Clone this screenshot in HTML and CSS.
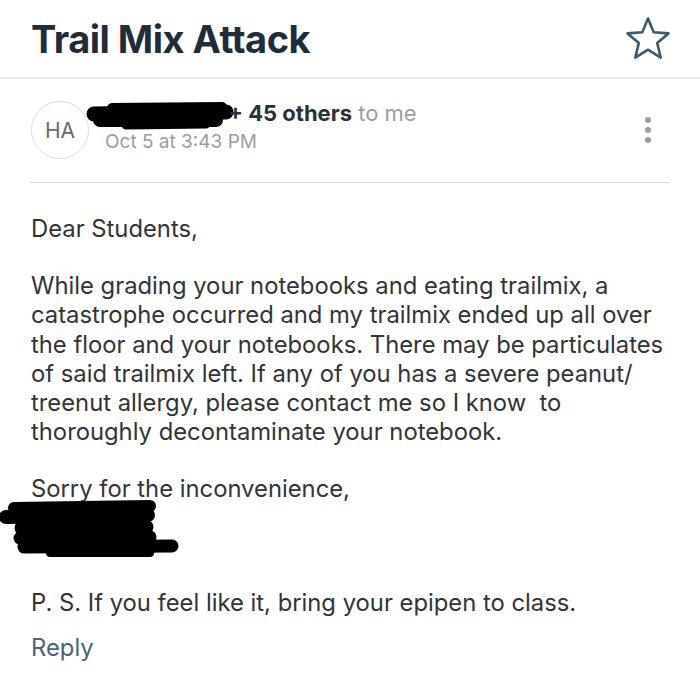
FILE: index.html
```html
<!DOCTYPE html>
<html>
<head>
<meta charset="utf-8">
<link rel="stylesheet" href="styles.css">
</head>
<body>
<div class="page">
  <header class="header">
    <h1 class="title">Trail Mix Attack</h1>
    <svg class="star" width="46" height="46" viewBox="0 0 46 46">
      <path d="M23 2.5 L28.7 16.3 L43.5 17.4 L32.2 27 L35.7 41.6 L23 33.7 L10.3 41.6 L13.8 27 L2.5 17.4 L17.3 16.3 Z" fill="none" stroke="#3e5a6e" stroke-width="2.6" stroke-linejoin="round"/>
    </svg>
  </header>
  <section class="sender">
    <div class="avatar">HA</div>
    <div class="meta">
      <div class="from"><svg class="redact-name" width="148" height="30" viewBox="0 0 148 30">
          <path d="M8 13 L140 11" stroke="#000" stroke-width="15" stroke-linecap="round"/>
          <path d="M26 7 L136 6" stroke="#000" stroke-width="10" stroke-linecap="round"/>
          <path d="M14 19 L130 19" stroke="#000" stroke-width="14" stroke-linecap="round"/>
          <path d="M40 24 L120 23" stroke="#000" stroke-width="9" stroke-linecap="round"/>
        </svg><span class="others">+ 45 others</span> <span class="tome">to me</span></div>
      <div class="date">Oct 5 at 3:43 PM</div>
    </div>
    <div class="kebab"><span></span><span></span><span></span></div>
  </section>
  <div class="rule"></div>
  <main class="body">
    <p class="para">Dear Students,</p>
    <p class="para">While grading your notebooks and eating trailmix, a<br>catastrophe occurred and my trailmix ended up all over<br>the floor and your notebooks. There may be particulates<br>of said trailmix left. If any of you has a severe peanut/<br>treenut allergy, please contact me so I know&nbsp; to<br>thoroughly decontaminate your notebook.</p>
    <p class="para sorry">Sorry for the inconvenience,</p>
    <svg class="redact-sig" width="180" height="60" viewBox="0 0 180 60">
      <path d="M14 8 L150 6" stroke="#000" stroke-width="12" stroke-linecap="round"/>
      <path d="M6 17 L148 15" stroke="#000" stroke-width="14" stroke-linecap="round"/>
      <path d="M22 28 L146 27" stroke="#000" stroke-width="15" stroke-linecap="round"/>
      <path d="M20 38 L150 37" stroke="#000" stroke-width="13" stroke-linecap="round"/>
      <path d="M24 47 L172 46" stroke="#000" stroke-width="13" stroke-linecap="round"/>
      <path d="M50 53 L150 53" stroke="#000" stroke-width="8" stroke-linecap="round"/>
    </svg>
    <p class="para ps">P. S. If you feel like it, bring your epipen to class.</p>
    <a class="reply">Reply</a>
  </main>
</div>
</body>
</html>
```
FILE: styles.css
```css
html, body {
  margin: 0;
  padding: 0;
  background: #fff;
}
.page {
  width: 700px;
  height: 684px;
  overflow: hidden;
  font-family: Inter, "Liberation Sans", sans-serif;
}
.header {
  height: 77px;
  border-bottom: 2px solid #e4e6e8;
  display: flex;
  align-items: flex-start;
  justify-content: space-between;
  padding: 0 29px 0 31px;
}
.title {
  margin: 16px 0 0 0;
  font-size: 38px;
  font-weight: 700;
  color: #1f2d3a;
  letter-spacing: -0.5px;
  line-height: 46px;
}
.star {
  display: block;
  margin-top: 16px;
}
.sender {
  display: flex;
  align-items: flex-start;
  padding: 0 49px 0 31px;
  height: 103px;
  box-sizing: border-box;
}
.avatar {
  width: 58px;
  height: 58px;
  margin-top: 22px;
  border: 1px solid #dedede;
  border-radius: 50%;
  box-sizing: border-box;
  display: flex;
  align-items: center;
  justify-content: center;
  font-size: 21px;
  color: #666a70;
  flex: none;
}
.meta {
  flex: 1;
  margin-left: -3px;
  padding-top: 20px;
}
.from {
  font-size: 22px;
  line-height: 28px;
  white-space: nowrap;
}
.redact-name {
  display: inline-block;
  vertical-align: -10px;
}
.others {
  font-weight: 700;
  color: #2b3033;
  margin-left: -6px;
}
.tome {
  color: #9a9ea2;
}
.date {
  font-size: 19px;
  line-height: 22px;
  color: #9a9ea2;
  margin-left: 19px;
}
.kebab {
  display: flex;
  flex-direction: column;
  gap: 4px;
  margin-top: 38px;
}
.kebab span {
  width: 6px;
  height: 6px;
  border-radius: 50%;
  background: #9a9ea2;
}
.rule {
  height: 1px;
  background: #dcdcdc;
  margin: 0 30px;
}
.body {
  padding: 31px 20px 0 31px;
  font-size: 23.8px;
  line-height: 29.3px;
  color: #323538;
  white-space: nowrap;
}
.para {
  margin: 0 0 27.7px 0;
}
.sorry {
  margin-bottom: 0;
}
.redact-sig {
  display: block;
  margin: -4px 0 0 -31px;
}
.ps {
  margin: 28px 0 15.7px 0;
}
.reply {
  display: block;
  color: #4a6479;
}
```
